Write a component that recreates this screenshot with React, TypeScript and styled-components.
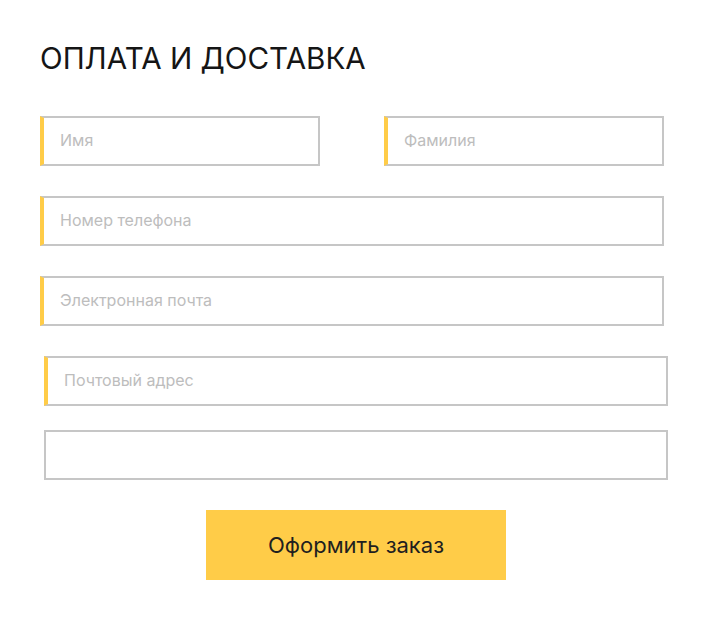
import React from "react";
import styled, { createGlobalStyle } from "styled-components";

const Global = createGlobalStyle`
  html, body { margin: 0; padding: 0; background: #fff; }
  body { font-family: Inter, "Noto Sans", sans-serif; }
  * { box-sizing: border-box; }
`;

const Page = styled.main`
  width: 712px;
  padding: 40px 48px 0 40px;
`;

const Title = styled.h1`
  margin: 0 0 40px 0;
  font-size: 29.6px;
  font-weight: 400;
  line-height: 36px;
  color: #151515;
  letter-spacing: 0;
`;

const Form = styled.form`
  display: flex;
  flex-direction: column;
`;

const Row = styled.div<{ $gap?: number; $shift?: number; $after?: number }>`
  display: flex;
  gap: ${(p) => p.$gap ?? 0}px;
  margin-left: ${(p) => p.$shift ?? 0}px;
  margin-right: ${(p) => -(p.$shift ?? 0)}px;
  margin-bottom: ${(p) => p.$after ?? 30}px;
`;

const Field = styled.input<{ $accent?: boolean }>`
  flex: 1;
  min-width: 0;
  height: 50px;
  border: 2px solid #c6c6c6;
  border-left: ${(p) => (p.$accent ? "4px solid #ffcc48" : "2px solid #c6c6c6")};
  padding: 0 0 2px 16px;
  font-family: Inter, "Noto Sans", sans-serif;
  font-size: 16px;
  color: #333;
  outline: none;
  background: #fff;
  &::placeholder { color: #bdbdbd; }
`;

const Submit = styled.button`
  align-self: center;
  margin-left: 8px;
  width: 300px;
  height: 70px;
  border: none;
  background: #ffcc48;
  font-family: Inter, "Noto Sans", sans-serif;
  font-size: 22px;
  color: #1f1f1f;
  cursor: pointer;
`;

export default function App() {
  return (
    <Page>
      <Global />
      <Title>ОПЛАТА И ДОСТАВКА</Title>
      <Form onSubmit={(e) => e.preventDefault()}>
        <Row $gap={64}>
          <Field $accent placeholder="Имя" />
          <Field $accent placeholder="Фамилия" />
        </Row>
        <Row>
          <Field $accent placeholder="Номер телефона" />
        </Row>
        <Row>
          <Field $accent placeholder="Электронная почта" />
        </Row>
        <Row $shift={4} $after={24}>
          <Field $accent placeholder="Почтовый адрес" />
        </Row>
        <Row $shift={4} $after={30}>
          <Field aria-label="Комментарий" />
        </Row>
        <Submit type="submit">Оформить заказ</Submit>
      </Form>
    </Page>
  );
}
